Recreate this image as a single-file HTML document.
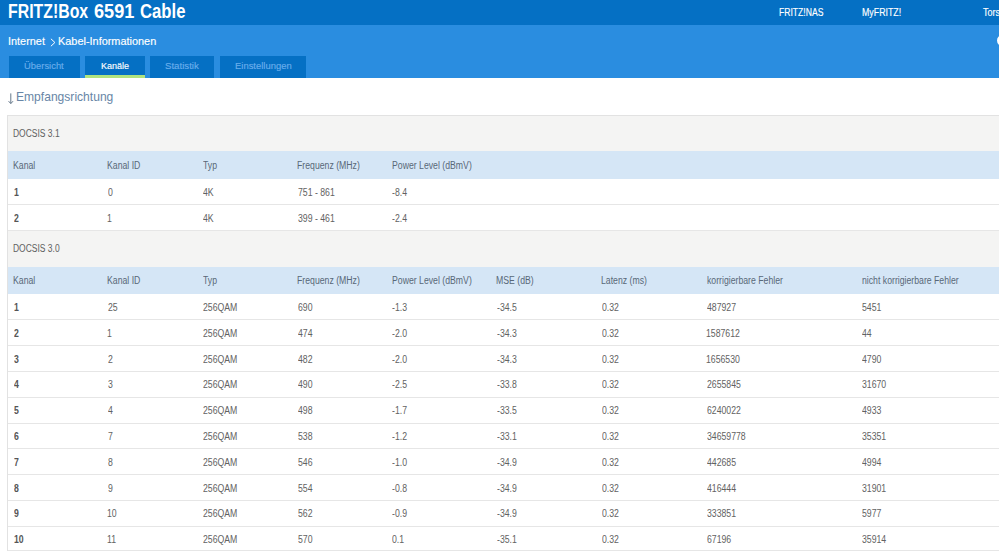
<!DOCTYPE html>
<html><head><meta charset="utf-8">
<style>
html,body{margin:0;padding:0;}
body{width:999px;height:551px;overflow:hidden;position:relative;background:#fff;font-family:"Liberation Sans",sans-serif;}
.t{position:absolute;white-space:nowrap;line-height:1;transform-origin:0 50%;}
.b{position:absolute;}
</style></head><body>
<div class="b" style="left:0;top:0;width:999px;height:25px;background:#0570c4"></div>
<div class="b" style="left:0;top:25px;width:999px;height:53px;background:#2a8de0"></div>
<div class="b" style="left:9px;top:56px;width:71px;height:22px;background:#0570c4"></div>
<div class="b" style="left:85px;top:56px;width:60px;height:22px;background:#0570c4"></div>
<div class="b" style="left:85px;top:75px;width:60px;height:2.5px;background:#b0e37f"></div>
<div class="b" style="left:150px;top:56px;width:64px;height:22px;background:#0570c4"></div>
<div class="b" style="left:220px;top:56px;width:86px;height:22px;background:#0570c4"></div>
<!-- circle icon -->
<div class="b" style="left:996.6px;top:35.2px;width:7px;height:7px;border:2px solid #fff;border-radius:50%"></div>
<!-- table -->
<div class="b" style="left:7px;top:114.5px;width:1000px;height:440px;border-left:1px solid #e2e2e2;border-top:1px solid #e2e2e2"></div>
<div class="b" style="left:8px;top:115.5px;width:999px;height:35.5px;background:#f4f4f3"></div>
<div class="b" style="left:8px;top:151px;width:999px;height:28px;background:#d5e6f6"></div>
<div class="b" style="left:8px;top:204px;width:999px;height:1px;background:#e6e6e6"></div>
<div class="b" style="left:8px;top:229.5px;width:999px;height:37px;background:#f4f4f3;border-top:1px solid #e6e6e6"></div>
<div class="b" style="left:8px;top:266.5px;width:999px;height:27.5px;background:#d5e6f6"></div>
<div id="rowlines"></div>
<div class="b" style="left:8px;top:319px;width:999px;height:1px;background:#e6e6e6"></div>
<div class="b" style="left:8px;top:345px;width:999px;height:1px;background:#e6e6e6"></div>
<div class="b" style="left:8px;top:371px;width:999px;height:1px;background:#e6e6e6"></div>
<div class="b" style="left:8px;top:397px;width:999px;height:1px;background:#e6e6e6"></div>
<div class="b" style="left:8px;top:423px;width:999px;height:1px;background:#e6e6e6"></div>
<div class="b" style="left:8px;top:448px;width:999px;height:1px;background:#e6e6e6"></div>
<div class="b" style="left:8px;top:474px;width:999px;height:1px;background:#e6e6e6"></div>
<div class="b" style="left:8px;top:500px;width:999px;height:1px;background:#e6e6e6"></div>
<div class="b" style="left:8px;top:526px;width:999px;height:1px;background:#e6e6e6"></div>
<div class="b" style="left:8px;top:550px;width:999px;height:1px;background:#e6e6e6"></div>
<!-- arrow -->
<svg class="b" style="left:7px;top:92px" width="8" height="13" viewBox="0 0 8 13"><path d="M3.8 1.4 V11.4 M1.6 9.2 L3.8 11.6 L6.0 9.2" stroke="#66788a" stroke-width="1" fill="none"/></svg>
<!-- chevron -->
<svg class="b" style="left:50px;top:37.5px" width="6" height="9" viewBox="0 0 6 9"><path d="M0.9 0.8 L4.9 4.5 L0.9 8.2" stroke="#fff" stroke-width="1" fill="none"/></svg>
<div class="t" style="left:8.19px;top:2.29px;font-size:19.5px;font-weight:bold;color:#fff;transform:scaleX(0.8133);">FRITZ!Box</div>
<div class="t" style="left:93.80px;top:2.29px;font-size:19.5px;font-weight:bold;color:#fff;transform:scaleX(0.9302);">6591</div>
<div class="t" style="left:139.64px;top:2.29px;font-size:19.5px;font-weight:bold;color:#fff;transform:scaleX(0.8558);">Cable</div>
<div class="t" style="left:778.79px;top:7.03px;font-size:10.6px;font-weight:normal;color:#fff;transform:scaleX(0.8111);-webkit-text-stroke:0.15px #fff;">FRITZ!NAS</div>
<div class="t" style="left:861.97px;top:7.03px;font-size:10.6px;font-weight:normal;color:#fff;transform:scaleX(0.8326);-webkit-text-stroke:0.15px #fff;">MyFRITZ!</div>
<div class="t" style="left:983.40px;top:7.03px;font-size:10.6px;font-weight:normal;color:#fff;transform:scaleX(0.8500);-webkit-text-stroke:0.15px #fff;">Torsten</div>
<div class="t" style="left:8.21px;top:35.89px;font-size:11px;font-weight:normal;color:#fff;transform:scaleX(0.9892);-webkit-text-stroke:0.15px #fff;">Internet</div>
<div class="t" style="left:58.01px;top:35.89px;font-size:11px;font-weight:normal;color:#fff;transform:scaleX(0.9918);-webkit-text-stroke:0.15px #fff;">Kabel-Informationen</div>
<div class="t" style="left:24.00px;top:60.72px;font-size:9.9px;font-weight:normal;color:#6aaeec;transform:scaleX(0.9524);-webkit-text-stroke:0.15px #6aaeec;">Übersicht</div>
<div class="t" style="left:100.90px;top:60.72px;font-size:9.9px;font-weight:normal;color:#fff;transform:scaleX(0.9129);-webkit-text-stroke:0.15px #fff;">Kanäle</div>
<div class="t" style="left:164.90px;top:60.72px;font-size:9.9px;font-weight:normal;color:#6aaeec;transform:scaleX(0.9771);-webkit-text-stroke:0.15px #6aaeec;">Statistik</div>
<div class="t" style="left:234.60px;top:60.72px;font-size:9.9px;font-weight:normal;color:#6aaeec;transform:scaleX(0.9559);-webkit-text-stroke:0.15px #6aaeec;">Einstellungen</div>
<div class="t" style="left:15.81px;top:91.47px;font-size:12.2px;font-weight:normal;color:#6886a6;transform:scaleX(0.9907);">Empfangsrichtung</div>
<div class="t" style="left:12.55px;top:128.94px;font-size:10px;font-weight:normal;color:#606060;transform:scaleX(0.8481);">DOCSIS 3.1</div>
<div class="t" style="left:12.93px;top:160.53px;font-size:10px;font-weight:normal;color:#586878;transform:scaleX(0.8700);">Kanal</div>
<div class="t" style="left:107.13px;top:160.53px;font-size:10px;font-weight:normal;color:#586878;transform:scaleX(0.8700);">Kanal ID</div>
<div class="t" style="left:203.00px;top:160.53px;font-size:10px;font-weight:normal;color:#586878;transform:scaleX(0.8700);">Typ</div>
<div class="t" style="left:296.63px;top:160.53px;font-size:10px;font-weight:normal;color:#586878;transform:scaleX(0.8700);">Frequenz (MHz)</div>
<div class="t" style="left:391.53px;top:160.53px;font-size:10px;font-weight:normal;color:#586878;transform:scaleX(0.8700);">Power Level (dBmV)</div>
<div class="t" style="left:13.80px;top:187.53px;font-size:10px;font-weight:bold;color:#555555;transform:scaleX(0.8700);">1</div>
<div class="t" style="left:108.00px;top:187.53px;font-size:10px;font-weight:normal;color:#626262;transform:scaleX(0.8700);">0</div>
<div class="t" style="left:203.00px;top:187.53px;font-size:10px;font-weight:normal;color:#626262;transform:scaleX(0.8700);">4K</div>
<div class="t" style="left:297.50px;top:187.53px;font-size:10px;font-weight:normal;color:#626262;transform:scaleX(0.8700);">751 - 861</div>
<div class="t" style="left:392.40px;top:187.53px;font-size:10px;font-weight:normal;color:#626262;transform:scaleX(0.8700);">-8.4</div>
<div class="t" style="left:13.80px;top:213.53px;font-size:10px;font-weight:bold;color:#555555;transform:scaleX(0.8700);">2</div>
<div class="t" style="left:107.13px;top:213.53px;font-size:10px;font-weight:normal;color:#626262;transform:scaleX(0.8700);">1</div>
<div class="t" style="left:203.00px;top:213.53px;font-size:10px;font-weight:normal;color:#626262;transform:scaleX(0.8700);">4K</div>
<div class="t" style="left:297.50px;top:213.53px;font-size:10px;font-weight:normal;color:#626262;transform:scaleX(0.8700);">399 - 461</div>
<div class="t" style="left:392.40px;top:213.53px;font-size:10px;font-weight:normal;color:#626262;transform:scaleX(0.8700);">-2.4</div>
<div class="t" style="left:12.55px;top:244.23px;font-size:10px;font-weight:normal;color:#606060;transform:scaleX(0.8481);">DOCSIS 3.0</div>
<div class="t" style="left:12.93px;top:275.54px;font-size:10px;font-weight:normal;color:#586878;transform:scaleX(0.8700);">Kanal</div>
<div class="t" style="left:107.13px;top:275.54px;font-size:10px;font-weight:normal;color:#586878;transform:scaleX(0.8700);">Kanal ID</div>
<div class="t" style="left:203.00px;top:275.54px;font-size:10px;font-weight:normal;color:#586878;transform:scaleX(0.8700);">Typ</div>
<div class="t" style="left:296.63px;top:275.54px;font-size:10px;font-weight:normal;color:#586878;transform:scaleX(0.8700);">Frequenz (MHz)</div>
<div class="t" style="left:391.53px;top:275.54px;font-size:10px;font-weight:normal;color:#586878;transform:scaleX(0.8700);">Power Level (dBmV)</div>
<div class="t" style="left:496.43px;top:275.54px;font-size:10px;font-weight:normal;color:#586878;transform:scaleX(0.8700);">MSE (dB)</div>
<div class="t" style="left:601.13px;top:275.54px;font-size:10px;font-weight:normal;color:#586878;transform:scaleX(0.8700);">Latenz (ms)</div>
<div class="t" style="left:707.20px;top:275.54px;font-size:10px;font-weight:normal;color:#586878;transform:scaleX(0.8700);">korrigierbare Fehler</div>
<div class="t" style="left:862.00px;top:275.54px;font-size:10px;font-weight:normal;color:#586878;transform:scaleX(0.8700);">nicht korrigierbare Fehler</div>
<div class="t" style="left:13.80px;top:303.04px;font-size:10px;font-weight:bold;color:#555555;transform:scaleX(0.8700);">1</div>
<div class="t" style="left:108.00px;top:303.04px;font-size:10px;font-weight:normal;color:#626262;transform:scaleX(0.8700);">25</div>
<div class="t" style="left:203.00px;top:303.04px;font-size:10px;font-weight:normal;color:#626262;transform:scaleX(0.8700);">256QAM</div>
<div class="t" style="left:297.50px;top:303.04px;font-size:10px;font-weight:normal;color:#626262;transform:scaleX(0.8700);">690</div>
<div class="t" style="left:392.40px;top:303.04px;font-size:10px;font-weight:normal;color:#626262;transform:scaleX(0.8700);">-1.3</div>
<div class="t" style="left:497.30px;top:303.04px;font-size:10px;font-weight:normal;color:#626262;transform:scaleX(0.8700);">-34.5</div>
<div class="t" style="left:602.00px;top:303.04px;font-size:10px;font-weight:normal;color:#626262;transform:scaleX(0.8700);">0.32</div>
<div class="t" style="left:707.20px;top:303.04px;font-size:10px;font-weight:normal;color:#626262;transform:scaleX(0.8700);">487927</div>
<div class="t" style="left:862.00px;top:303.04px;font-size:10px;font-weight:normal;color:#626262;transform:scaleX(0.8700);">5451</div>
<div class="t" style="left:13.80px;top:328.84px;font-size:10px;font-weight:bold;color:#555555;transform:scaleX(0.8700);">2</div>
<div class="t" style="left:107.13px;top:328.84px;font-size:10px;font-weight:normal;color:#626262;transform:scaleX(0.8700);">1</div>
<div class="t" style="left:203.00px;top:328.84px;font-size:10px;font-weight:normal;color:#626262;transform:scaleX(0.8700);">256QAM</div>
<div class="t" style="left:297.50px;top:328.84px;font-size:10px;font-weight:normal;color:#626262;transform:scaleX(0.8700);">474</div>
<div class="t" style="left:392.40px;top:328.84px;font-size:10px;font-weight:normal;color:#626262;transform:scaleX(0.8700);">-2.0</div>
<div class="t" style="left:497.30px;top:328.84px;font-size:10px;font-weight:normal;color:#626262;transform:scaleX(0.8700);">-34.3</div>
<div class="t" style="left:602.00px;top:328.84px;font-size:10px;font-weight:normal;color:#626262;transform:scaleX(0.8700);">0.32</div>
<div class="t" style="left:706.33px;top:328.84px;font-size:10px;font-weight:normal;color:#626262;transform:scaleX(0.8700);">1587612</div>
<div class="t" style="left:862.00px;top:328.84px;font-size:10px;font-weight:normal;color:#626262;transform:scaleX(0.8700);">44</div>
<div class="t" style="left:13.80px;top:354.64px;font-size:10px;font-weight:bold;color:#555555;transform:scaleX(0.8700);">3</div>
<div class="t" style="left:108.00px;top:354.64px;font-size:10px;font-weight:normal;color:#626262;transform:scaleX(0.8700);">2</div>
<div class="t" style="left:203.00px;top:354.64px;font-size:10px;font-weight:normal;color:#626262;transform:scaleX(0.8700);">256QAM</div>
<div class="t" style="left:297.50px;top:354.64px;font-size:10px;font-weight:normal;color:#626262;transform:scaleX(0.8700);">482</div>
<div class="t" style="left:392.40px;top:354.64px;font-size:10px;font-weight:normal;color:#626262;transform:scaleX(0.8700);">-2.0</div>
<div class="t" style="left:497.30px;top:354.64px;font-size:10px;font-weight:normal;color:#626262;transform:scaleX(0.8700);">-34.3</div>
<div class="t" style="left:602.00px;top:354.64px;font-size:10px;font-weight:normal;color:#626262;transform:scaleX(0.8700);">0.32</div>
<div class="t" style="left:706.33px;top:354.64px;font-size:10px;font-weight:normal;color:#626262;transform:scaleX(0.8700);">1656530</div>
<div class="t" style="left:862.00px;top:354.64px;font-size:10px;font-weight:normal;color:#626262;transform:scaleX(0.8700);">4790</div>
<div class="t" style="left:13.80px;top:380.44px;font-size:10px;font-weight:bold;color:#555555;transform:scaleX(0.8700);">4</div>
<div class="t" style="left:108.00px;top:380.44px;font-size:10px;font-weight:normal;color:#626262;transform:scaleX(0.8700);">3</div>
<div class="t" style="left:203.00px;top:380.44px;font-size:10px;font-weight:normal;color:#626262;transform:scaleX(0.8700);">256QAM</div>
<div class="t" style="left:297.50px;top:380.44px;font-size:10px;font-weight:normal;color:#626262;transform:scaleX(0.8700);">490</div>
<div class="t" style="left:392.40px;top:380.44px;font-size:10px;font-weight:normal;color:#626262;transform:scaleX(0.8700);">-2.5</div>
<div class="t" style="left:497.30px;top:380.44px;font-size:10px;font-weight:normal;color:#626262;transform:scaleX(0.8700);">-33.8</div>
<div class="t" style="left:602.00px;top:380.44px;font-size:10px;font-weight:normal;color:#626262;transform:scaleX(0.8700);">0.32</div>
<div class="t" style="left:707.20px;top:380.44px;font-size:10px;font-weight:normal;color:#626262;transform:scaleX(0.8700);">2655845</div>
<div class="t" style="left:862.00px;top:380.44px;font-size:10px;font-weight:normal;color:#626262;transform:scaleX(0.8700);">31670</div>
<div class="t" style="left:13.80px;top:406.24px;font-size:10px;font-weight:bold;color:#555555;transform:scaleX(0.8700);">5</div>
<div class="t" style="left:108.00px;top:406.24px;font-size:10px;font-weight:normal;color:#626262;transform:scaleX(0.8700);">4</div>
<div class="t" style="left:203.00px;top:406.24px;font-size:10px;font-weight:normal;color:#626262;transform:scaleX(0.8700);">256QAM</div>
<div class="t" style="left:297.50px;top:406.24px;font-size:10px;font-weight:normal;color:#626262;transform:scaleX(0.8700);">498</div>
<div class="t" style="left:392.40px;top:406.24px;font-size:10px;font-weight:normal;color:#626262;transform:scaleX(0.8700);">-1.7</div>
<div class="t" style="left:497.30px;top:406.24px;font-size:10px;font-weight:normal;color:#626262;transform:scaleX(0.8700);">-33.5</div>
<div class="t" style="left:602.00px;top:406.24px;font-size:10px;font-weight:normal;color:#626262;transform:scaleX(0.8700);">0.32</div>
<div class="t" style="left:707.20px;top:406.24px;font-size:10px;font-weight:normal;color:#626262;transform:scaleX(0.8700);">6240022</div>
<div class="t" style="left:862.00px;top:406.24px;font-size:10px;font-weight:normal;color:#626262;transform:scaleX(0.8700);">4933</div>
<div class="t" style="left:13.80px;top:432.04px;font-size:10px;font-weight:bold;color:#555555;transform:scaleX(0.8700);">6</div>
<div class="t" style="left:108.00px;top:432.04px;font-size:10px;font-weight:normal;color:#626262;transform:scaleX(0.8700);">7</div>
<div class="t" style="left:203.00px;top:432.04px;font-size:10px;font-weight:normal;color:#626262;transform:scaleX(0.8700);">256QAM</div>
<div class="t" style="left:297.50px;top:432.04px;font-size:10px;font-weight:normal;color:#626262;transform:scaleX(0.8700);">538</div>
<div class="t" style="left:392.40px;top:432.04px;font-size:10px;font-weight:normal;color:#626262;transform:scaleX(0.8700);">-1.2</div>
<div class="t" style="left:497.30px;top:432.04px;font-size:10px;font-weight:normal;color:#626262;transform:scaleX(0.8700);">-33.1</div>
<div class="t" style="left:602.00px;top:432.04px;font-size:10px;font-weight:normal;color:#626262;transform:scaleX(0.8700);">0.32</div>
<div class="t" style="left:707.20px;top:432.04px;font-size:10px;font-weight:normal;color:#626262;transform:scaleX(0.8700);">34659778</div>
<div class="t" style="left:862.00px;top:432.04px;font-size:10px;font-weight:normal;color:#626262;transform:scaleX(0.8700);">35351</div>
<div class="t" style="left:13.80px;top:457.84px;font-size:10px;font-weight:bold;color:#555555;transform:scaleX(0.8700);">7</div>
<div class="t" style="left:108.00px;top:457.84px;font-size:10px;font-weight:normal;color:#626262;transform:scaleX(0.8700);">8</div>
<div class="t" style="left:203.00px;top:457.84px;font-size:10px;font-weight:normal;color:#626262;transform:scaleX(0.8700);">256QAM</div>
<div class="t" style="left:297.50px;top:457.84px;font-size:10px;font-weight:normal;color:#626262;transform:scaleX(0.8700);">546</div>
<div class="t" style="left:392.40px;top:457.84px;font-size:10px;font-weight:normal;color:#626262;transform:scaleX(0.8700);">-1.0</div>
<div class="t" style="left:497.30px;top:457.84px;font-size:10px;font-weight:normal;color:#626262;transform:scaleX(0.8700);">-34.9</div>
<div class="t" style="left:602.00px;top:457.84px;font-size:10px;font-weight:normal;color:#626262;transform:scaleX(0.8700);">0.32</div>
<div class="t" style="left:707.20px;top:457.84px;font-size:10px;font-weight:normal;color:#626262;transform:scaleX(0.8700);">442685</div>
<div class="t" style="left:862.00px;top:457.84px;font-size:10px;font-weight:normal;color:#626262;transform:scaleX(0.8700);">4994</div>
<div class="t" style="left:13.80px;top:483.64px;font-size:10px;font-weight:bold;color:#555555;transform:scaleX(0.8700);">8</div>
<div class="t" style="left:108.00px;top:483.64px;font-size:10px;font-weight:normal;color:#626262;transform:scaleX(0.8700);">9</div>
<div class="t" style="left:203.00px;top:483.64px;font-size:10px;font-weight:normal;color:#626262;transform:scaleX(0.8700);">256QAM</div>
<div class="t" style="left:297.50px;top:483.64px;font-size:10px;font-weight:normal;color:#626262;transform:scaleX(0.8700);">554</div>
<div class="t" style="left:392.40px;top:483.64px;font-size:10px;font-weight:normal;color:#626262;transform:scaleX(0.8700);">-0.8</div>
<div class="t" style="left:497.30px;top:483.64px;font-size:10px;font-weight:normal;color:#626262;transform:scaleX(0.8700);">-34.9</div>
<div class="t" style="left:602.00px;top:483.64px;font-size:10px;font-weight:normal;color:#626262;transform:scaleX(0.8700);">0.32</div>
<div class="t" style="left:707.20px;top:483.64px;font-size:10px;font-weight:normal;color:#626262;transform:scaleX(0.8700);">416444</div>
<div class="t" style="left:862.00px;top:483.64px;font-size:10px;font-weight:normal;color:#626262;transform:scaleX(0.8700);">31901</div>
<div class="t" style="left:13.80px;top:509.44px;font-size:10px;font-weight:bold;color:#555555;transform:scaleX(0.8700);">9</div>
<div class="t" style="left:107.13px;top:509.44px;font-size:10px;font-weight:normal;color:#626262;transform:scaleX(0.8700);">10</div>
<div class="t" style="left:203.00px;top:509.44px;font-size:10px;font-weight:normal;color:#626262;transform:scaleX(0.8700);">256QAM</div>
<div class="t" style="left:297.50px;top:509.44px;font-size:10px;font-weight:normal;color:#626262;transform:scaleX(0.8700);">562</div>
<div class="t" style="left:392.40px;top:509.44px;font-size:10px;font-weight:normal;color:#626262;transform:scaleX(0.8700);">-0.9</div>
<div class="t" style="left:497.30px;top:509.44px;font-size:10px;font-weight:normal;color:#626262;transform:scaleX(0.8700);">-34.9</div>
<div class="t" style="left:602.00px;top:509.44px;font-size:10px;font-weight:normal;color:#626262;transform:scaleX(0.8700);">0.32</div>
<div class="t" style="left:707.20px;top:509.44px;font-size:10px;font-weight:normal;color:#626262;transform:scaleX(0.8700);">333851</div>
<div class="t" style="left:862.00px;top:509.44px;font-size:10px;font-weight:normal;color:#626262;transform:scaleX(0.8700);">5977</div>
<div class="t" style="left:13.80px;top:535.24px;font-size:10px;font-weight:bold;color:#555555;transform:scaleX(0.8700);">10</div>
<div class="t" style="left:107.13px;top:535.24px;font-size:10px;font-weight:normal;color:#626262;transform:scaleX(0.8700);">11</div>
<div class="t" style="left:203.00px;top:535.24px;font-size:10px;font-weight:normal;color:#626262;transform:scaleX(0.8700);">256QAM</div>
<div class="t" style="left:297.50px;top:535.24px;font-size:10px;font-weight:normal;color:#626262;transform:scaleX(0.8700);">570</div>
<div class="t" style="left:392.40px;top:535.24px;font-size:10px;font-weight:normal;color:#626262;transform:scaleX(0.8700);">0.1</div>
<div class="t" style="left:497.30px;top:535.24px;font-size:10px;font-weight:normal;color:#626262;transform:scaleX(0.8700);">-35.1</div>
<div class="t" style="left:602.00px;top:535.24px;font-size:10px;font-weight:normal;color:#626262;transform:scaleX(0.8700);">0.32</div>
<div class="t" style="left:707.20px;top:535.24px;font-size:10px;font-weight:normal;color:#626262;transform:scaleX(0.8700);">67196</div>
<div class="t" style="left:862.00px;top:535.24px;font-size:10px;font-weight:normal;color:#626262;transform:scaleX(0.8700);">35914</div>
</body></html>
